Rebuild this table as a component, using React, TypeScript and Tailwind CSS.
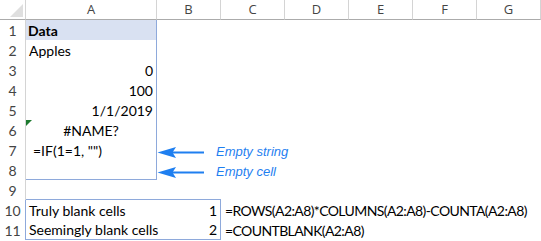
import type { ReactNode } from 'react';

const BLUE = 'border-[#8ea9db]';

const Corner = () => (
  <div className="h-5 border-r border-b border-r-[#d4d4d4] border-b-[#ababab] relative">
    <svg width="25" height="19" className="absolute left-0 top-0">
      <polygon points="23,4 23,17 10,17" fill="#dfdfdf" />
    </svg>
  </div>
);

const ColHead = ({ label }: { label: string }) => (
  <div className="h-5 flex items-center justify-center border-r border-b border-r-[#d4d4d4] border-b-[#ababab] text-[13px] text-[#444] font-['Open_Sans',sans-serif]">
    {label}
  </div>
);

const RowHead = ({ n, boxed }: { n: number; boxed?: boolean }) => (
  <div
    className={`h-5 flex items-center justify-center border-r text-[#444] ${
      boxed ? BLUE : 'border-[#d4d4d4]'
    }`}
  >
    {n}
  </div>
);

const Cell = ({ children, className = '' }: { children?: ReactNode; className?: string }) => (
  <div className={`h-5 flex items-center whitespace-nowrap overflow-visible relative ${className}`}>
    {children}
  </div>
);

// empty cells for the rest of columns B..G
const Blank = ({ from = 0 }: { from?: number }) => (
  <>
    {Array.from({ length: 6 - from }).map((_, i) => (
      <Cell key={i} />
    ))}
  </>
);

const Arrow = () => (
  <svg width="47" height="20" viewBox="0 0 47 20" className="shrink-0">
    <rect x="15" y="11.5" width="32" height="2" fill="#1f7ff0" />
    <path d="M0.5 12.5 L19 7 L15.5 12.5 L19 18 Z" fill="#1f7ff0" />
  </svg>
);

const Note = ({ text }: { text: string }) => (
  <Cell>
    <Arrow />
    <span className="ml-3 pt-[4px] italic text-[13px] text-[#1f7ff0] font-['Liberation_Sans',Arial,sans-serif]">
      {text}
    </span>
  </Cell>
);

export default function App() {
  const colA = `border-r ${BLUE}`;
  return (
    <div className="w-[541px] h-[241px] overflow-hidden bg-white text-[14px] text-black font-['Lato',sans-serif]">
      <div className="grid grid-cols-[26px_131px_64px_64px_64px_64px_64px_64px] auto-rows-[20px]">
        <Corner />
        {['A', 'B', 'C', 'D', 'E', 'F', 'G'].map((c) => (
          <ColHead key={c} label={c} />
        ))}

        <RowHead n={1} />
        <Cell className={`${colA} bg-[#d9e1f2] font-bold pl-[2px]`}>Data</Cell>
        <Blank />

        <RowHead n={2} />
        <Cell className={`${colA} pl-[3px]`}>Apples</Cell>
        <Blank />

        <RowHead n={3} />
        <Cell className={`${colA} justify-end pr-[3px]`}>0</Cell>
        <Blank />

        <RowHead n={4} />
        <Cell className={`${colA} justify-end pr-[3px]`}>100</Cell>
        <Blank />

        <RowHead n={5} />
        <Cell className={`${colA} justify-end pr-[3px]`}>1/1/2019</Cell>
        <Blank />

        <RowHead n={6} />
        <Cell className={`${colA} justify-center`}>
          <svg width="6" height="6" className="absolute left-0 top-0">
            <polygon points="0,0 6,0 0,6" fill="#1d7a2e" />
          </svg>
          #NAME?
        </Cell>
        <Blank />

        <RowHead n={7} />
        <Cell className={`${colA} pl-[7px]`}>=IF(1=1, "")</Cell>
        <Note text="Empty string" />
        <Blank from={1} />

        <RowHead n={8} />
        <Cell className={`${colA} border-b`} />
        <Note text="Empty cell" />
        <Blank from={1} />

        <RowHead n={9} />
        <Cell className={`border-b ${BLUE}`} />
        <Cell className={`border-b ${BLUE}`} />
        <Blank from={1} />

        <RowHead n={10} boxed />
        <Cell className="pl-[3px]">Truly blank cells</Cell>
        <Cell className={`border-r ${BLUE} justify-end pr-[3px]`}>1</Cell>
        <Cell className="pl-[4px] tracking-[-0.6px]">=ROWS(A2:A8)*COLUMNS(A2:A8)-COUNTA(A2:A8)</Cell>
        <Blank from={2} />

        <RowHead n={11} boxed />
        <Cell className={`border-b ${BLUE} pl-[3px]`}>Seemingly blank cells</Cell>
        <Cell className={`border-r border-b ${BLUE} justify-end pr-[3px]`}>2</Cell>
        <Cell className="pl-[4px] tracking-[-0.6px]">=COUNTBLANK(A2:A8)</Cell>
        <Blank from={2} />
      </div>
    </div>
  );
}
